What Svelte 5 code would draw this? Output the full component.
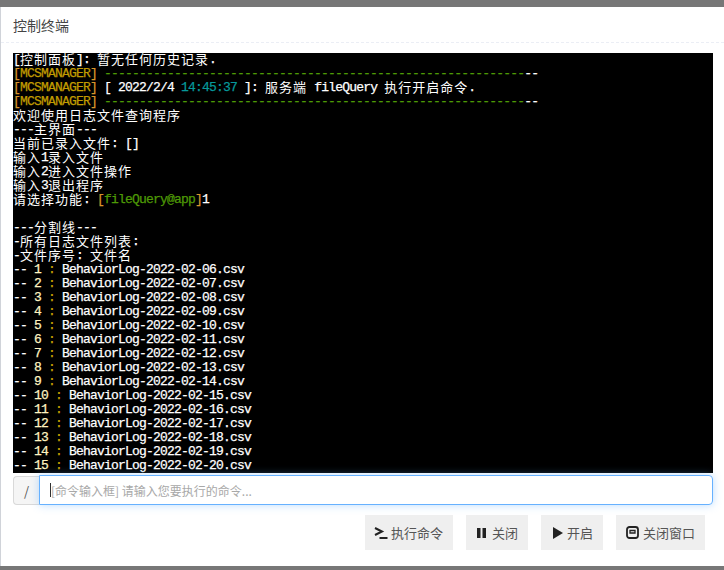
<script>
  const Y = 'y', G = 'g', T = 't', L = 'l', O = 'o', C = 'c';
  const tag = [[O, '['], [Y, 'MCSMANAGER'], [O, ']'], [null, ' ']];
  const rule = [...tag, [G, '-'.repeat(60)], [null, '--']];

  const files = [];
  for (let i = 1; i <= 15; i++) {
    const day = String(i + 5).padStart(2, '0');
    files.push([[null, '-- '], [L, String(i)], [null, ' '], [C, ':'], [null, ' BehaviorLog-2022-02-' + day + '.csv']]);
  }

  const lines = [
    [[null, '[控制面板]: 暂无任何历史记录.']],
    rule,
    [...tag, [null, '[ 2022/2/4 '], [T, '14:45:37'], [null, ' ]: 服务端 fileQuery 执行开启命令.']],
    rule,
    [[null, '欢迎使用日志文件查询程序']],
    [[null, '---主界面---']],
    [[null, '当前已录入文件: []']],
    [[null, '输入1录入文件']],
    [[null, '输入2进入文件操作']],
    [[null, '输入3退出程序']],
    [[null, '请选择功能: '], [O, '['], [G, 'fileQuery@app'], [O, ']'], [null, '1']],
    [],
    [[null, '---分割线---']],
    [[null, '-所有日志文件列表:']],
    [[null, '-文件序号: 文件名']],
    ...files
  ];

  // wide characters take two terminal cells, so they are split off from the rest
  function runs(text) {
    return text.match(/[\u2e80-\u9fff]+|[^\u2e80-\u9fff]+/g) ?? [];
  }
  const isWide = (s) => /[\u2e80-\u9fff]/.test(s);
</script>

<div class="backdrop">
  <div class="modal">
    <header class="modal-head">控制终端</header>
    <div class="modal-body">
      <div class="terminal">
        {#each lines as line}
          <div class="term-line">
            {#each line as [color, text]}
              {#each runs(text) as run}
                <span class="{color ?? ''}" class:wide={isWide(run)}>{run}</span>
              {/each}
            {/each}
          </div>
        {/each}
      </div>

      <div class="input-row">
        <span class="prefix">/</span>
        <div class="input"><i class="caret"></i><span>[命令输入框] 请输入您要执行的命令...</span></div>
      </div>

      <div class="actions">
        <button>
          <svg width="12" height="12" viewBox="0 0 12 12"><path d="M0 1 7 4.500 0 8" fill="none" stroke="#222" stroke-width="2"/><path d="M4.500 11h8" stroke="#222" stroke-width="2"/></svg>
          执行命令
        </button>
        <button>
          <svg width="12" height="12" viewBox="0 0 12 12"><path d="M1 1h3.500v10H1zM6.500 1H10v10H6.500z" fill="#222"/></svg>
          关闭
        </button>
        <button>
          <svg width="12" height="12" viewBox="0 0 12 12"><path d="M2 0 12 6 2 12z" fill="#222"/></svg>
          开启
        </button>
        <button>
          <svg width="13" height="13" viewBox="0 0 13 13"><rect x="1" y="1" width="11" height="11" rx="2.500" fill="none" stroke="#222" stroke-width="1.800"/><path d="M4 4.500h5v2.500H4z" fill="none" stroke="#222" stroke-width="1.300"/></svg>
          关闭窗口
        </button>
      </div>
    </div>
  </div>
</div>

<style>
  :global(body) {
    margin: 0;
    background: #777;
    font-family: "Noto Sans CJK SC", "Liberation Sans", sans-serif;
  }

  .backdrop {
    height: 570px;
    box-sizing: border-box;
    padding: 7px 0 4px 0;
    overflow: hidden;
  }

  .modal {
    height: 559px;
    background: #fff;
    border-left: 1px solid #d0d3d9;
    box-sizing: border-box;
  }

  .modal-head {
    height: 35px;
    padding: 0 12px;
    line-height: 36px;
    font-size: 14px;
    color: #444;
    border-bottom: 1px dashed #ebeef5;
  }

  .modal-body {
    padding: 10px 11px 0 12px;
  }

  .terminal {
    height: 420px;
    background: #000;
    overflow: hidden;
    font-family: "Liberation Mono", "Noto Sans CJK SC", monospace;
    font-size: 13px;
    color: #fff;
  }

  .term-line {
    height: 14px;
    white-space: pre;
    letter-spacing: -0.8px;
    display: flex;
    align-items: flex-start;
  }

  .term-line span {
    height: 14px;
    line-height: 14px;
    -webkit-text-stroke: 0.25px currentColor;
  }

  .term-line .wide {
    letter-spacing: 1px;
    font-size: 13px;
    line-height: 11px;
    font-family: "Noto Sans CJK SC", sans-serif;
    -webkit-text-stroke: 0;
  }

  .y { color: #c19c00; }
  .o { color: #d9952c; }
  .g { color: #4e9a06; }
  .t { color: #06989a; }
  .l { color: #fff3c0; }
  .c { color: #c4a000; }

  .input-row {
    display: flex;
    height: 30px;
    margin-top: 2px;
  }

  .prefix {
    width: 26px;
    margin-top: 1px;
    box-sizing: border-box;
    background: #f5f5f5;
    border: 1px solid #d9d9d9;
    border-right: 0;
    border-radius: 4px 0 0 4px;
    text-align: center;
    line-height: 27px;
    font-size: 13px;
    color: #555;
  }

  .input {
    flex: 1;
    display: flex;
    align-items: center;
    padding-left: 10px;
    border: 1px solid #66b1ff;
    border-radius: 0 4px 4px 0;
    box-shadow: 0 0 8px rgba(102, 177, 255, 0.45);
    font-size: 12px;
    color: #a8a8a8;
  }

  .caret {
    width: 1px;
    height: 14px;
    background: #303133;
  }

  .actions {
    display: flex;
    justify-content: flex-end;
    gap: 13px;
    margin-top: 10px;
    padding-right: 8px;
  }

  button {
    height: 35px;
    padding: 0 10px;
    display: flex;
    align-items: center;
    gap: 4px;
    background: #efefef;
    border: 0;
    font-family: inherit;
    font-size: 13px;
    color: #555;
  }

  svg {
    overflow: visible;
  }
</style>
